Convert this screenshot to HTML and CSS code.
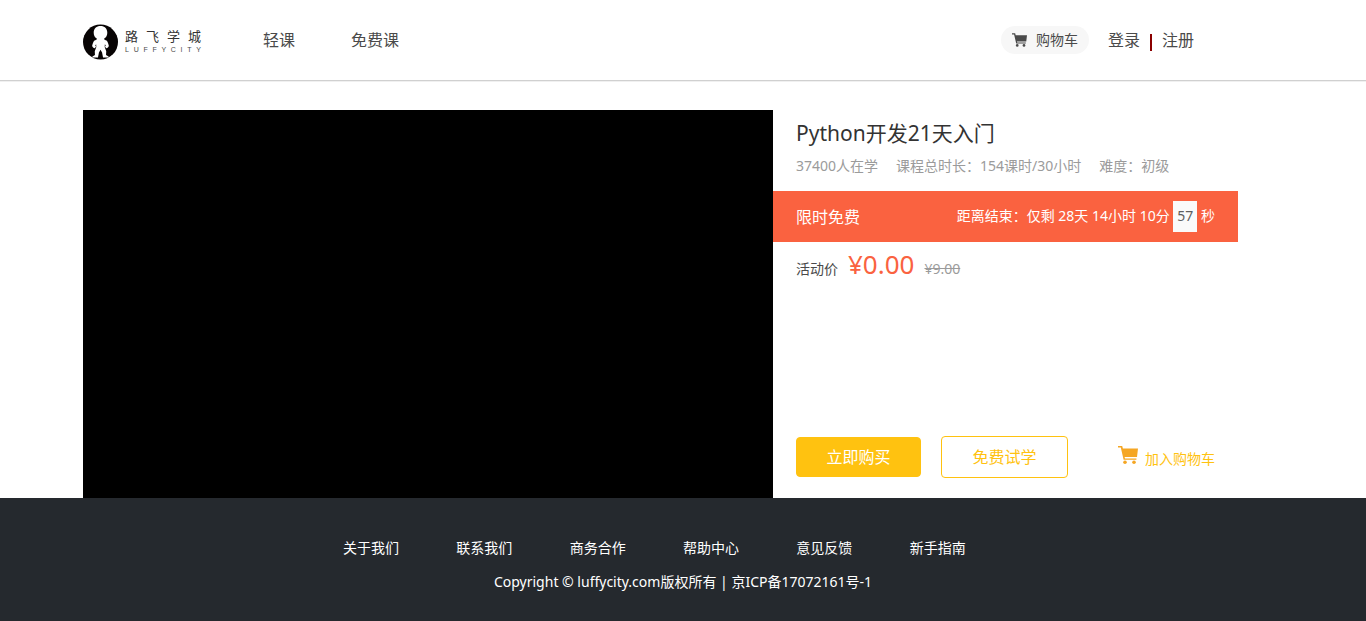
FILE: index.html
```html
<!DOCTYPE html>
<html lang="zh-CN">
<head>
<meta charset="utf-8">
<title>Python开发21天入门 - 路飞学城</title>
<link rel="stylesheet" href="styles.css">
</head>
<body>
<svg class="sprite" aria-hidden="true">
  <symbol id="cart" viewBox="0 0 20 18">
    <path d="M0 0h4.2l.7 2.6H20l-1 8.4H6.6l.4 1.4h11.4v1.4H5.6L2.8 1.6H0z"/>
    <circle cx="7" cy="16.2" r="1.8"/>
    <circle cx="16" cy="16.2" r="1.8"/>
  </symbol>
</svg>
<header class="header">
  <div class="container header-inner">
    <a class="logo" href="#" aria-label="路飞学城">
      <svg class="logo-mark" viewBox="0 0 36 36" aria-hidden="true">
        <circle cx="18" cy="18" r="18" fill="#080404"/>
        <path fill="#fff" d="M18 1.6c4.2 0 7 2.8 7 6.8 0 2.8-1.4 5.1-3.4 6.2.2 1.1 1.4 1.2 2.6 1.9 1.3 1.2 2 3.6 2.4 5.6-.4 1.2-1.4 2-2.6 2.2l-1.4-1.4.8-1.2-.9-1.4-.2 2.8 1.6 4.4-.2 3.8 2.6 1.5v1.2h-5.7l-1-5.2-1.6-2.8-1.6 2.8-1 5.2H9.700v-1.2l2.6-1.5-.2-3.800 1.600-4.400-.2-2.800-.9 1.400.8 1.200-1.400 1.400c-1.200-.2-2.200-1-2.600-2.200.4-2 1.100-4.400 2.400-5.600 1.200-.7 2.400-.8 2.600-1.900-2-1.100-3.400-3.400-3.400-6.200 0-4 2.800-6.800 7-6.800z"/>
      </svg>
      <span class="logo-text">
        <span class="logo-cn"><span>路</span><span>飞</span><span>学</span><span>城</span></span>
        <span class="logo-en"><span>L</span><span>U</span><span>F</span><span>F</span><span>Y</span><span>C</span><span>I</span><span>T</span><span>Y</span></span>
      </span>
    </a>
    <nav class="nav">
      <a href="#">轻课</a>
      <a href="#">免费课</a>
    </nav>
    <div class="account">
      <a class="cart-link" href="#"><svg class="cart-icon" aria-hidden="true"><use href="#cart"/></svg>购物车</a>
      <a href="#">登录</a>
      <span class="divider"></span>
      <a href="#">注册</a>
    </div>
  </div>
</header>
<main class="container course">
  <div class="video"></div>
  <section class="info">
    <h1 class="title">Python开发21天入门</h1>
    <p class="meta"><span>37400人在学</span><span>课程总时长：154课时/30小时</span><span>难度：初级</span></p>
    <div class="promo">
      <span class="promo-name">限时免费</span>
      <span class="countdown">距离结束：仅剩 28天 14小时 10分 <span class="seconds">57</span> 秒</span>
    </div>
    <p class="price"><span>活动价</span><span class="price-now">¥0.00</span><del class="price-old">¥9.00</del></p>
    <div class="actions">
      <button class="btn btn-buy" type="button">立即购买</button>
      <button class="btn btn-try" type="button">免费试学</button>
      <a class="add-cart" href="#"><svg class="add-icon" aria-hidden="true"><use href="#cart"/></svg><span>加入购物车</span></a>
    </div>
  </section>
</main>
<footer class="footer">
  <nav class="footer-links">
    <a href="#">关于我们</a>
    <a href="#">联系我们</a>
    <a href="#">商务合作</a>
    <a href="#">帮助中心</a>
    <a href="#">意见反馈</a>
    <a href="#">新手指南</a>
  </nav>
  <p class="copyright">Copyright © luffycity.com版权所有 | 京ICP备17072161号-1</p>
</footer>
</body>
</html>
```
FILE: styles.css
```css
* {
  box-sizing: border-box;
}

body {
  display: flex;
  flex-direction: column;
  min-height: 100vh;
  margin: 0;
  background: #fff;
  color: #4a4a4a;
  font-family: "Noto Sans", "Noto Sans CJK SC", sans-serif;
  font-size: 14px;
  line-height: 20px;
}

a {
  color: inherit;
  text-decoration: none;
}

h1,
p {
  margin: 0;
  font-weight: 400;
}

.sprite {
  display: none;
}

.container {
  width: 100%;
  max-width: 1200px;
  margin: 0 auto;
}

.header {
  border-bottom: 1px solid #d0d0d0;
  box-shadow: 0 1px 0 #f0f0f0;
}

.header-inner {
  display: flex;
  align-items: center;
  height: 80px;
}

.logo {
  display: flex;
  align-items: center;
  gap: 7px;
  padding-top: 4px;
}

.logo-mark {
  width: 35px;
  height: 36px;
}

.logo-text {
  width: 76px;
  padding-top: 2px;
}

.logo-cn,
.logo-en {
  display: flex;
  justify-content: space-between;
}

.logo-cn {
  font-size: 13px;
  line-height: 14px;
  color: #333;
}

.logo-en {
  font-family: "Liberation Sans", sans-serif;
  font-size: 7px;
  line-height: 14px;
}

.nav {
  display: flex;
  gap: 56px;
  margin-left: 62px;
  font-size: 16px;
}

.account {
  display: flex;
  align-items: center;
  margin-left: auto;
  margin-right: 89px;
  font-size: 16px;
}

.cart-link {
  display: flex;
  align-items: center;
  gap: 9px;
  height: 28px;
  margin-right: 19px;
  padding: 0 11px;
  border-radius: 14px;
  background: #f7f7f7;
  font-size: 14px;
}

.cart-icon {
  width: 15px;
  height: 14px;
  fill: #4a4a4a;
}

.divider {
  width: 2px;
  height: 17px;
  margin: 4px 10px 0;
  background: #8b0000;
}

.course {
  display: flex;
  padding: 29px 45px 0 0;
}

.video {
  flex: 1;
  height: 388px;
  background: #000;
}

.info {
  display: flex;
  flex-direction: column;
  width: 465px;
}

.title {
  padding: 9px 23px;
  color: #333;
  font-size: 21px;
  line-height: 28px;
}

.meta {
  display: flex;
  gap: 18px;
  padding: 0 23px 15px;
  color: #9b9b9b;
}

.promo {
  display: flex;
  align-items: center;
  justify-content: space-between;
  padding: 10px 23px;
  background: #fa6240;
  color: #fff;
}

.promo-name {
  font-size: 16px;
}

.seconds {
  display: inline-block;
  padding: 5px 4px 6px;
  background: #fafafa;
  color: #5e5e5e;
}

.price {
  display: flex;
  align-items: baseline;
  gap: 10px;
  padding: 3px 23px;
}

.price-now {
  color: #fa6240;
  font-size: 26px;
  line-height: 38px;
}

.price-old {
  color: #9b9b9b;
}

.actions {
  display: flex;
  align-items: center;
  margin-top: auto;
  padding: 0 23px 20px;
}

.btn {
  border: 1px solid #ffc210;
  border-radius: 4px;
  font-family: inherit;
  font-size: 16px;
  line-height: 24px;
}

.btn-buy {
  width: 125px;
  height: 40px;
  margin-right: 20px;
  padding: 0;
  background: #ffc210;
  color: #fff;
}

.btn-try {
  width: 127px;
  height: 42px;
  padding: 0;
  background: #fff;
  color: #ffc210;
}

.add-cart {
  display: flex;
  align-items: center;
  gap: 7px;
  margin-left: auto;
  color: #ffc210;
}

.add-cart span {
  padding-top: 3px;
}

.add-icon {
  width: 20px;
  height: 18px;
  margin-bottom: 4px;
  fill: #f5a623;
}

.footer {
  flex: 1;
  padding: 40px 0 29px;
  background: #25292e;
  color: #fff;
}

.footer-links {
  display: grid;
  grid-template-columns: repeat(6, 1fr);
  max-width: 680px;
  margin: 0 auto 14px;
}

.copyright {
  text-align: center;
}
```
